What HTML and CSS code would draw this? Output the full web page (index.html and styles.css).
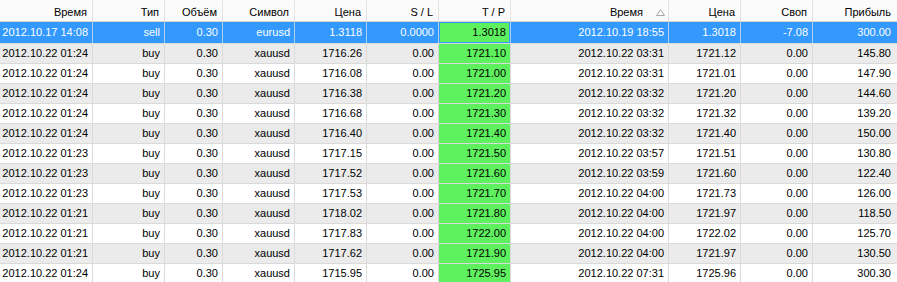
FILE: index.html
```html
<!DOCTYPE html>
<html lang="ru">
<head>
<meta charset="utf-8">
<title>История</title>
<link rel="stylesheet" href="styles.css">
</head>
<body>
<div class="grid">
  <div class="row head">
    <div class="c c1">Время</div>
    <div class="c c2">Тип</div>
    <div class="c c3">Объём</div>
    <div class="c c4">Символ</div>
    <div class="c c5">Цена</div>
    <div class="c c6">S / L</div>
    <div class="c c7">T / P</div>
    <div class="c c8 sorted">Время<svg class="sort" width="9" height="7" viewBox="0 0 9 7"><path d="M0.5 6.5 L4.5 0.5 L8.5 6.5 Z" fill="none" stroke="#a4a4a4" stroke-width="1"/></svg></div>
    <div class="c c9">Цена</div>
    <div class="c c10">Своп</div>
    <div class="c c11">Прибыль</div>
  </div>

  <div class="row sel">
    <div class="c c1">2012.10.17 14:08</div><div class="c c2">sell</div><div class="c c3">0.30</div><div class="c c4">eurusd</div><div class="c c5">1.3118</div><div class="c c6">0.0000</div><div class="c c7 tp">1.3018</div><div class="c c8">2012.10.19 18:55</div><div class="c c9">1.3018</div><div class="c c10">-7.08</div><div class="c c11">300.00</div>
  </div>
  <div class="row alt">
    <div class="c c1">2012.10.22 01:24</div><div class="c c2">buy</div><div class="c c3">0.30</div><div class="c c4">xauusd</div><div class="c c5">1716.26</div><div class="c c6">0.00</div><div class="c c7 tp">1721.10</div><div class="c c8">2012.10.22 03:31</div><div class="c c9">1721.12</div><div class="c c10">0.00</div><div class="c c11">145.80</div>
  </div>
  <div class="row">
    <div class="c c1">2012.10.22 01:24</div><div class="c c2">buy</div><div class="c c3">0.30</div><div class="c c4">xauusd</div><div class="c c5">1716.08</div><div class="c c6">0.00</div><div class="c c7 tp">1721.00</div><div class="c c8">2012.10.22 03:31</div><div class="c c9">1721.01</div><div class="c c10">0.00</div><div class="c c11">147.90</div>
  </div>
  <div class="row alt">
    <div class="c c1">2012.10.22 01:24</div><div class="c c2">buy</div><div class="c c3">0.30</div><div class="c c4">xauusd</div><div class="c c5">1716.38</div><div class="c c6">0.00</div><div class="c c7 tp">1721.20</div><div class="c c8">2012.10.22 03:32</div><div class="c c9">1721.20</div><div class="c c10">0.00</div><div class="c c11">144.60</div>
  </div>
  <div class="row">
    <div class="c c1">2012.10.22 01:24</div><div class="c c2">buy</div><div class="c c3">0.30</div><div class="c c4">xauusd</div><div class="c c5">1716.68</div><div class="c c6">0.00</div><div class="c c7 tp">1721.30</div><div class="c c8">2012.10.22 03:32</div><div class="c c9">1721.32</div><div class="c c10">0.00</div><div class="c c11">139.20</div>
  </div>
  <div class="row alt">
    <div class="c c1">2012.10.22 01:24</div><div class="c c2">buy</div><div class="c c3">0.30</div><div class="c c4">xauusd</div><div class="c c5">1716.40</div><div class="c c6">0.00</div><div class="c c7 tp">1721.40</div><div class="c c8">2012.10.22 03:32</div><div class="c c9">1721.40</div><div class="c c10">0.00</div><div class="c c11">150.00</div>
  </div>
  <div class="row">
    <div class="c c1">2012.10.22 01:23</div><div class="c c2">buy</div><div class="c c3">0.30</div><div class="c c4">xauusd</div><div class="c c5">1717.15</div><div class="c c6">0.00</div><div class="c c7 tp">1721.50</div><div class="c c8">2012.10.22 03:57</div><div class="c c9">1721.51</div><div class="c c10">0.00</div><div class="c c11">130.80</div>
  </div>
  <div class="row alt">
    <div class="c c1">2012.10.22 01:23</div><div class="c c2">buy</div><div class="c c3">0.30</div><div class="c c4">xauusd</div><div class="c c5">1717.52</div><div class="c c6">0.00</div><div class="c c7 tp">1721.60</div><div class="c c8">2012.10.22 03:59</div><div class="c c9">1721.60</div><div class="c c10">0.00</div><div class="c c11">122.40</div>
  </div>
  <div class="row">
    <div class="c c1">2012.10.22 01:23</div><div class="c c2">buy</div><div class="c c3">0.30</div><div class="c c4">xauusd</div><div class="c c5">1717.53</div><div class="c c6">0.00</div><div class="c c7 tp">1721.70</div><div class="c c8">2012.10.22 04:00</div><div class="c c9">1721.73</div><div class="c c10">0.00</div><div class="c c11">126.00</div>
  </div>
  <div class="row alt">
    <div class="c c1">2012.10.22 01:21</div><div class="c c2">buy</div><div class="c c3">0.30</div><div class="c c4">xauusd</div><div class="c c5">1718.02</div><div class="c c6">0.00</div><div class="c c7 tp">1721.80</div><div class="c c8">2012.10.22 04:00</div><div class="c c9">1721.97</div><div class="c c10">0.00</div><div class="c c11">118.50</div>
  </div>
  <div class="row">
    <div class="c c1">2012.10.22 01:21</div><div class="c c2">buy</div><div class="c c3">0.30</div><div class="c c4">xauusd</div><div class="c c5">1717.83</div><div class="c c6">0.00</div><div class="c c7 tp">1722.00</div><div class="c c8">2012.10.22 04:00</div><div class="c c9">1722.02</div><div class="c c10">0.00</div><div class="c c11">125.70</div>
  </div>
  <div class="row alt">
    <div class="c c1">2012.10.22 01:21</div><div class="c c2">buy</div><div class="c c3">0.30</div><div class="c c4">xauusd</div><div class="c c5">1717.62</div><div class="c c6">0.00</div><div class="c c7 tp">1721.90</div><div class="c c8">2012.10.22 04:00</div><div class="c c9">1721.97</div><div class="c c10">0.00</div><div class="c c11">130.50</div>
  </div>
  <div class="row">
    <div class="c c1">2012.10.22 01:24</div><div class="c c2">buy</div><div class="c c3">0.30</div><div class="c c4">xauusd</div><div class="c c5">1715.95</div><div class="c c6">0.00</div><div class="c c7 tp">1725.95</div><div class="c c8">2012.10.22 07:31</div><div class="c c9">1725.96</div><div class="c c10">0.00</div><div class="c c11">300.30</div>
  </div>
</div>
</body>
</html>
```

FILE: styles.css
```css
html, body {
  margin: 0;
  padding: 0;
  background: #ffffff;
}

body {
  font-family: "Liberation Sans", Arial, sans-serif;
  font-size: 11px;
  color: #000000;
}

.grid {
  width: 897px;
  overflow: hidden;
}

.row {
  display: flex;
  height: 20px;
  box-sizing: border-box;
  border-bottom: 1px solid #dadada;
  background: #ffffff;
}

.c {
  flex: none;
  box-sizing: border-box;
  border-right: 1px solid #dadada;
  padding-right: 4px;
  text-align: right;
  line-height: 19px;
  white-space: nowrap;
  overflow: hidden;
}

.c1 { width: 93px; }
.c2 { width: 72px; }
.c3 { width: 58px; }
.c4 { width: 72px; }
.c5 { width: 72px; }
.c6 { width: 72px; }
.c7 { width: 72px; }
.c8 { width: 158px; }
.c9 { width: 72px; }
.c10 { width: 72px; }
.c11 { width: 84px; border-right: none; padding-right: 6px; }

/* header */
.head {
  height: 22px;
  background: #fbfbfb;
  border-bottom-color: #d5d5d5;
}

.head .c {
  padding-top: 3px;
  line-height: 18px;
  padding-right: 5px;
  border-right-color: #e4e4e4;
}

.head .c11 { padding-right: 6px; border-right: none; }

.head .sorted { padding-right: 3px; }

.sort {
  margin-left: 13px;
  vertical-align: 0;
}

/* body rows */
.alt { background: #ebebeb; }

.sel {
  height: 22px;
  background: #3399ff;
  color: #ffffff;
}

.sel .c {
  line-height: 21px;
  border-right-color: #acd0f4;
}

.tp { background: #5ff05f; }

.sel .tp {
  color: #000000;
  box-shadow: inset 0 0 0 1px #3399ff;
}
```
